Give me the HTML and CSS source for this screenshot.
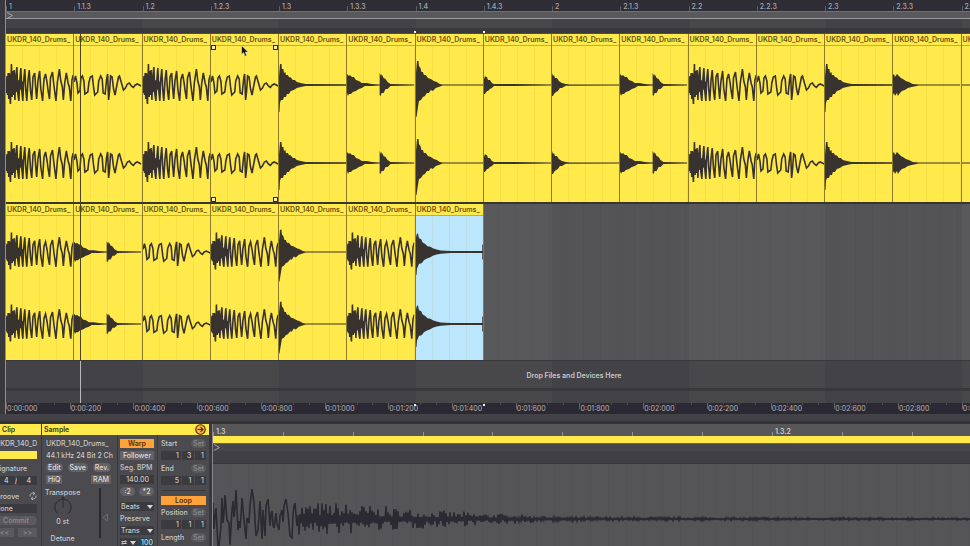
FILE: index.html
```html
<!DOCTYPE html>
<html lang="en">
<head>
  <meta charset="UTF-8">
  <meta name="viewport" content="width=device-width, initial-scale=1.0">
  <title>Arrangement</title>
  <link rel="stylesheet" href="styles.css">
</head>
<body>

  <!-- waveform shapes, one per sample slice -->
  <svg class="defs" aria-hidden="true">
    <g id="w-roll"><path d="M0,-6 L2,-9 5,-11 8,-8 12,-5 18,-3 18,3 12,6 8,9 5,12 2,10 0,6Z"/><path class="line" d="M0,-6 L.5,8 1,-9 1.6,10 2.2,-12 2.8,14 3.4,-12 4,12 4.5,19 5.5,-21 6.2,12 7,-14 7.6,10 8.2,-15 9,15 9.8,-8 11,-18 12,9 13,16 14,-5 15,-17 16,6 17,16 18,-6 19,-16 20,5 21,16 22.3,-5 23.5,-15 24.8,6 26,15 27.3,-8 29,-12 30,3 31,14 32.3,-4 34,-14 35.2,4 37,16 38.4,-6 40,-11 41.6,-2 42.6,6 44,14 45,-7 47,-13 48.4,0 50.5,16 52,-3 54,-16 55.4,-4 57,2 58,15 59.4,-2 61,-12 62.8,-2 64,2 65.5,16 66.7,-5 68,-10"/></g>
    <g id="w-wobble"><path class="line" d="M0,-3 L1.5,-9 3,-2 4,8 6,6 7,-7 8.5,-9 10,-4 11,9 14,7 15,-2 16.5,-8 18.5,-9 20,4 21,10 24,7 25,-4 27,-9 28.5,-6 29.5,8 31.5,9 33,-6 34,-11 35,15 36,6 37,-9 38.5,-8 40,4 41.5,10 43,2 45,-8 46,-9 48,-2 50,5 52,3 54,-1 56,-2 58,1 60,2.5 62,0 64,-1 68,1"/></g>
    <g id="w-kick"><path d="M0,-8 L1,-21 2.5,-21 3,-16 4.5,-16 5,-12 6.5,-13 7,-10 9,-10 10,-8 12,-7.5 14,-5 16,-5 18,-3 22,-2 27,-1 68,-.7 68,.7 27,1 22,2 18,3 15,5 12,6 10,9 8,9 7,12 5,12 4,15 2,15 1,18 .5,27 0,27Z"/></g>
    <g id="w-bigkick"><path d="M0,-12 L1,-24 2.5,-24 3,-19 4.5,-17 5.5,-13 7,-13 8,-10 10,-10 12,-7 15,-6 18,-4 21,-3 24,-1 27,-.5 68,-.5 68,.5 27,.5 23,2 20,3 17,6 15,5 13,8 11,8 9,11 7,12 5,15 3,16 2,22 .5,32 0,32Z"/></g>
    <g id="w-double"><path d="M0,-11 L2,-9 3,-10 5,-8 7,-8 9,-5 12,-4 15,-2 20,-2 25,-1 33,-.6 33,-12 34.5,-9 35,-11 37,-7 39,-6 41,-3 44,-1 68,-.6 68,.6 44,1 41,4 39,4 37,8 35,8 34,11 33,10 33,.6 25,1 18,1 15,3 12,4 9,6 6,7 4,9 2,9 1,11 0,8Z"/></g>
    <g id="w-small"><path d="M0,-6 L1,-9 2,-8 3,-8 4,-5 6,-5 8,-2 10,-1 30,-1 68,-.6 68,.6 30,1 10,1 8,3 6,4 4,6 3,6 1,9 0,9Z"/></g>
    <g id="w-hit"><path d="M0,-12 L1,-9 2,-10 3,-7 5,-7 7,-4 10,-2 14,-1 18,-.5 68,-.5 68,.5 14,.8 10,3 8,3 6,6 4,7 2,9 1,11 0,11Z"/></g>
    <g id="w-tom"><path d="M0,-10 L1,-11 2,-8 4,-11 6,-9 8,-7 10,-6 13,-4 16,-3 20,-1 26,-.5 68,-.5 68,.5 26,.6 19,2 15,3 12,5 9,6 7,8 5,11 4,8 2,11 1,8 0,10Z"/></g>
    <g id="w-sub"><path d="M0,-16 L1,-20 2,-20 3,-15 5,-14 7,-10 9,-9 12,-6 14,-6 17,-4 20,-3 25,-1.5 35,-1 67,-1 67,-8 68,-8 68,8 67,8 67,1 35,1 25,2 20,3 17,4 14,6 11,7 8,9 6,12 3,13 1,18 .5,25 0,25Z"/></g>
    <g id="w-flat"><path d="M0,-.5H68V.5H0Z"/></g>

    <symbol id="roll" viewBox="0 0 68 156" preserveAspectRatio="none"><use href="#w-roll" y="39"/><use href="#w-roll" y="117"/></symbol>
    <symbol id="wobble" viewBox="0 0 68 156" preserveAspectRatio="none"><use href="#w-wobble" y="39"/><use href="#w-wobble" y="117"/></symbol>
    <symbol id="kick" viewBox="0 0 68 156" preserveAspectRatio="none"><use href="#w-kick" y="39"/><use href="#w-kick" y="117"/></symbol>
    <symbol id="bigkick" viewBox="0 0 68 156" preserveAspectRatio="none"><use href="#w-bigkick" y="39"/><use href="#w-bigkick" y="117"/></symbol>
    <symbol id="double" viewBox="0 0 68 156" preserveAspectRatio="none"><use href="#w-double" y="39"/><use href="#w-double" y="117"/></symbol>
    <symbol id="small" viewBox="0 0 68 156" preserveAspectRatio="none"><use href="#w-small" y="39"/><use href="#w-small" y="117"/></symbol>
    <symbol id="hit" viewBox="0 0 68 156" preserveAspectRatio="none"><use href="#w-hit" y="39"/><use href="#w-hit" y="117"/></symbol>
    <symbol id="tom" viewBox="0 0 68 156" preserveAspectRatio="none"><use href="#w-tom" y="39"/><use href="#w-tom" y="117"/></symbol>
    <symbol id="sub" viewBox="0 0 68 156" preserveAspectRatio="none"><use href="#w-sub" y="39"/><use href="#w-sub" y="117"/></symbol>
    <symbol id="flat" viewBox="0 0 68 156" preserveAspectRatio="none"><use href="#w-flat" y="39"/><use href="#w-flat" y="117"/></symbol>
  </svg>

  <main class="arrangement">
    <div class="row ruler">
      <span>1</span><span>1.1.3</span><span>1.2</span><span>1.2.3</span><span>1.3</span>
      <span>1.3.3</span><span>1.4</span><span>1.4.3</span><span>2</span><span>2.1.3</span>
      <span>2.2</span><span>2.2.3</span><span>2.3</span><span>2.3.3</span><span>2.4</span>
    </div>
    <div class="loop-strip">
      <svg class="flag" viewBox="0 0 8 7"><path d="M1,.5 L6.5,3.5 1,6.5"/></svg>
    </div>
    <div class="scrub"></div>
    <div class="scrub-edge"></div>

    <div class="row lane lane-a">
      <div class="clip"><span>UKDR_140_Drums_</span><svg><use href="#roll"/></svg></div>
      <div class="clip"><span>UKDR_140_Drums_</span><svg><use href="#wobble"/></svg></div>
      <div class="clip"><span>UKDR_140_Drums_</span><svg><use href="#roll"/></svg></div>
      <div class="clip handles"><span>UKDR_140_Drums_</span><svg><use href="#wobble"/></svg><i></i><i></i><i></i><i></i></div>
      <div class="clip"><span>UKDR_140_Drums_</span><svg><use href="#kick"/></svg></div>
      <div class="clip"><span>UKDR_140_Drums_</span><svg><use href="#double"/></svg></div>
      <div class="clip"><span>UKDR_140_Drums_</span><svg><use href="#bigkick"/></svg></div>
      <div class="clip"><span>UKDR_140_Drums_</span><svg><use href="#small"/></svg></div>
      <div class="clip"><span>UKDR_140_Drums_</span><svg><use href="#hit"/></svg></div>
      <div class="clip"><span>UKDR_140_Drums_</span><svg><use href="#double"/></svg></div>
      <div class="clip"><span>UKDR_140_Drums_</span><svg><use href="#roll"/></svg></div>
      <div class="clip"><span>UKDR_140_Drums_</span><svg><use href="#wobble"/></svg></div>
      <div class="clip"><span>UKDR_140_Drums_</span><svg><use href="#kick"/></svg></div>
      <div class="clip"><span>UKDR_140_Drums_</span><svg><use href="#tom"/></svg></div>
      <div class="clip"><span>UKDR_140_Drums_</span><svg><use href="#flat"/></svg></div>
    </div>
    <div class="row lane lane-b">
      <div class="clip"><span>UKDR_140_Drums_</span><svg><use href="#roll"/></svg></div>
      <div class="clip"><span>UKDR_140_Drums_</span><svg><use href="#double"/></svg></div>
      <div class="clip"><span>UKDR_140_Drums_</span><svg><use href="#wobble"/></svg></div>
      <div class="clip"><span>UKDR_140_Drums_</span><svg><use href="#roll"/></svg></div>
      <div class="clip"><span>UKDR_140_Drums_</span><svg><use href="#bigkick"/></svg></div>
      <div class="clip"><span>UKDR_140_Drums_</span><svg><use href="#roll"/></svg></div>
      <div class="clip selected"><span>UKDR_140_Drums_</span><svg><use href="#sub"/></svg></div>
    </div>

    <div class="drop">Drop Files and Devices Here</div>
    <div class="track-gap"></div>
    <div class="master"></div>
    <div class="time-ruler">
      <span>0:00:000</span><span>0:00:200</span><span>0:00:400</span><span>0:00:600</span>
      <span>0:00:800</span><span>0:01:000</span><span>0:01:200</span><span>0:01:400</span>
      <span>0:01:600</span><span>0:01:800</span><span>0:02:000</span><span>0:02:200</span>
      <span>0:02:400</span><span>0:02:600</span><span>0:02:800</span><span>0:03:000</span>
    </div>

    <div class="playhead"></div>
    <div class="mark mark-start"></div>
    <div class="mark mark-end"></div>
    <div class="mark mark-start mark-low"></div>
    <div class="mark mark-end mark-low"></div>
    <svg class="cursor" viewBox="0 0 8 12"><path d="M.5,.5 V9.5 L2.6,7.7 4,11.3 5.8,10.5 4.3,7.2 7.2,7Z"/></svg>
  </main>

  <section class="detail">
    <div class="panel clip-panel">
      <h2>Clip</h2>
      <div class="clip-inner">
        <div class="name">UKDR_140_Drums_</div>
        <button class="color" aria-label="Clip colour"></button>
        <label for="sigTop">Signature</label>
        <div class="sig"><input id="sigTop" value="4"><span>/</span><input aria-label="Denominator" value="4"></div>
        <label class="groove" for="groove">Groove
          <svg viewBox="0 0 8 8"><path d="M1,4.5 A3,3 0 0 1 5.5,1.4 M7,3.5 A3,3 0 0 1 2.5,6.6 M4,0 L6,1.5 4,3 M4,5 L2,6.5 4,8"/></svg>
        </label>
        <select id="groove"><option>None</option></select>
        <button class="pill off">Commit</button>
        <div class="pair"><button class="off">&lt;&lt;</button><button class="off">&gt;&gt;</button></div>
      </div>
    </div>

    <div class="panel sample-panel">
      <h2>Sample
        <button class="hot" aria-label="Hot swap"><svg viewBox="0 0 10 10"><circle cx="5" cy="5" r="4.3"/><path d="M2.3,5H7 M5,2.8 L7.3,5 5,7.2"/></svg></button>
      </h2>
      <div class="columns">
        <div class="col col-sample">
          <div class="name">UKDR_140_Drums_</div>
          <div class="info">44.1 kHz 24 Bit 2 Ch</div>
          <div class="buttons"><button class="pill">Edit</button><button class="pill">Save</button><button class="pill">Rev.</button></div>
          <div class="buttons"><button>HiQ</button><button>RAM</button></div>
          <div class="pitch">
            <div class="transpose">
              <span>Transpose</span>
              <svg viewBox="0 0 22 22"><path d="M5.5,18.5 A9,9 0 1 1 16.5,18.5 M11,12V3"/><path class="tip" d="M9,0H13L11,2.5Z"/></svg>
              <b>0 st</b>
              <span class="detune">Detune</span>
            </div>
            <svg class="gain" viewBox="0 0 10 50"><path class="track" d="M1,0V50"/><path d="M8.5,26 L4,29.5 8.5,33Z"/></svg>
          </div>
        </div>

        <div class="col col-warp">
          <button class="on">Warp</button>
          <button>Follower</button>
          <label for="bpm">Seg. BPM</label>
          <input id="bpm" value="140.00">
          <div class="pair"><button class="pill">:2</button><button class="pill">*2</button></div>
          <div class="drop-down mode"><select aria-label="Warp mode"><option>Beats</option></select></div>
          <label for="preserve">Preserve</label>
          <div class="drop-down"><select id="preserve"><option>Trans</option></select></div>
          <div class="transient">
            <div class="drop-down"><select aria-label="Transient loop mode"><option>⇄</option></select></div>
            <input class="blue" aria-label="Transient envelope" value="100">
          </div>
        </div>

        <div class="col col-loop">
          <div class="head"><span>Start</span><button class="pill off">Set</button></div>
          <div class="cells"><input aria-label="Start bar" value="1"><input aria-label="Start beat" value="3"><input aria-label="Start sixteenth" value="1"></div>
          <div class="head"><span>End</span><button class="pill off">Set</button></div>
          <div class="cells"><input aria-label="End bar" value="5"><input aria-label="End beat" value="1"><input aria-label="End sixteenth" value="1"></div>
          <hr>
          <button class="on">Loop</button>
          <div class="head"><span>Position</span><button class="pill off">Set</button></div>
          <div class="cells"><input aria-label="Position bar" value="1"><input aria-label="Position beat" value="1"><input aria-label="Position sixteenth" value="1"></div>
          <div class="head"><span>Length</span><button class="pill off">Set</button></div>
        </div>
      </div>
    </div>

    <div class="editor">
      <div class="editor-ruler">
        <span>1.3</span><span></span><span></span><span></span><span></span><span></span>
        <span></span><span></span><span>1.3.2</span><span></span><span></span>
      </div>
      <div class="editor-loop"></div>
      <div class="editor-marker"><svg class="flag" viewBox="0 0 8 7"><path d="M1,.5 L6.5,3.5 1,6.5"/></svg></div>
      <div class="editor-scrub"></div>
      <svg class="editor-wave" viewBox="0 0 757 82" preserveAspectRatio="none"><path id="wave"/></svg>
    </div>
  </section>

  <script src="script.js"></script>
</body>
</html>
```
FILE: styles.css
```css
* {
  box-sizing: border-box;
}

body {
  margin: 0;
  height: 100vh;
  display: flex;
  flex-direction: column;
  overflow: hidden;
  background: #39383d;
  color: #c9c8ca;
  font-family: Inter, "Liberation Sans", sans-serif;
  font-size: 7px;
  font-weight: 500;
  line-height: 9px;
}

.defs {
  position: absolute;
  width: 0;
  height: 0;
}

/* Arrangement */
.arrangement {
  position: relative;
  margin-left: 5px;
  border-left: 1px solid #908f92;
}

.row {
  display: grid;
  grid-template-columns: repeat(15, 7.08%);
  grid-template-rows: 100%;
  overflow: hidden;
}

.ruler {
  height: 11px;
  background: #2e2d35;
  color: #a8a7aa;
}

.ruler span {
  padding: 2px 0 0 3px;
  background: linear-gradient(#5c5b61, #5c5b61) 0 6px / 1px 5px no-repeat;
}

.loop-strip {
  height: 8px;
  background: #59585b;
  border-top: 1px solid #706f72;
  border-bottom: 1px solid #9a999c;
}

.flag {
  display: block;
  width: 8px;
  height: 7px;
  fill: none;
  stroke: #a5a4a7;
}

.scrub,
.drop,
.master {
  background: repeating-linear-gradient(90deg, #434246 0 14.16%, #48474a 14.16% 28.32%);
}

.scrub {
  height: 9px;
}

.scrub-edge {
  height: 5px;
  background: #3a383b;
}

.lane {
  border-top: 1px solid #57501f;
}

.lane-a {
  height: 169px;
}

.lane-b {
  height: 159px;
  border-top: 2px solid #39362f;
  border-bottom: 1px solid #39383a;
  background:
    repeating-linear-gradient(90deg, transparent 0 16px, rgba(0, 0, 0, 0.04) 16px 17px),
    repeating-linear-gradient(90deg, #545356 0 14.16%, #59585b 14.16% 28.32%);
}

.clip {
  position: relative;
  display: flex;
  flex-direction: column;
  min-width: 0;
  border-right: 1px solid #8c7c28;
  background: #ffe94b;
  color: #66520f;
}

.clip span {
  flex: none;
  height: 12px;
  padding: 1px 0 0 1px;
  overflow: hidden;
  border-bottom: 1px solid #c6ae34;
  font-weight: 600;
  line-height: 10px;
}

.clip svg {
  display: block;
  width: 100%;
  flex: 1;
  min-height: 0;
  fill: #38332f;
  background: repeating-linear-gradient(90deg, transparent 0 16px, rgba(150, 120, 0, 0.08) 16px 17px);
}

.line {
  fill: none;
  stroke: #38332f;
  stroke-width: 1.6px;
  vector-effect: non-scaling-stroke;
}

.selected svg {
  background-color: #bce6fc;
}

.handles i {
  position: absolute;
  width: 5px;
  height: 5px;
  border: 1px solid #33291a;
  background: #fff0a0;
}

.handles i:nth-of-type(1) { left: 0; top: 11px; }
.handles i:nth-of-type(2) { right: 0; top: 11px; }
.handles i:nth-of-type(3) { left: 0; bottom: 0; }
.handles i:nth-of-type(4) { right: 0; bottom: 0; }

.drop {
  height: 27px;
  display: flex;
  justify-content: center;
  align-items: center;
  padding: 2px 0 0 172px;
  font-weight: 600;
}

.track-gap {
  height: 3px;
  background: #39383b;
}

.master {
  height: 12px;
}

.time-ruler {
  display: grid;
  grid-template-columns: repeat(16, 6.61%);
  height: 11px;
  overflow: hidden;
  background: #2a2934;
  color: #b9b1b3;
  font-weight: 400;
  line-height: 11px;
}

.time-ruler span {
  padding-left: 1px;
  background:
    linear-gradient(#66656b, #66656b) 0 0 / 1px 6px no-repeat,
    repeating-linear-gradient(90deg, #4b4a50 0 1px, transparent 1px 25%) 0 0 / 100% 2px no-repeat;
}

.playhead {
  position: absolute;
  left: 74px;
  top: 33px;
  bottom: 11px;
  width: 1px;
  background: linear-gradient(#4b431f 0 328px, #b8b7ba 328px);
}

.mark {
  position: absolute;
  top: 31px;
  width: 2px;
  height: 2px;
  background: #f0f0f0;
}

.mark-start { left: 42.3%; }
.mark-end { left: 49.5%; }
.mark-low { top: 404px; }

.cursor {
  position: absolute;
  left: 235px;
  top: 45px;
  width: 8px;
  height: 12px;
  fill: #17151a;
  stroke: #f3eecf;
  stroke-width: 0.6px;
}

/* Detail view */
.detail {
  flex: 1;
  min-height: 0;
  display: flex;
  margin-top: 7px;
  border-top: 3px solid #343338;
  box-shadow: 0 -7px #434247;
}

.panel {
  overflow: hidden;
  background: #4b4a4e;
}

.panel h2 {
  display: flex;
  justify-content: space-between;
  align-items: center;
  height: 11px;
  margin: 0;
  padding: 0 3px 0 2px;
  background: #ffe94b;
  color: #40340d;
  font-size: 7px;
  font-weight: 600;
}

button,
input,
select {
  display: block;
  height: 9px;
  margin: 0;
  padding: 0 2px;
  border: 0;
  border-radius: 0;
  font: inherit;
  color: inherit;
  appearance: none;
}

button {
  background: #626165;
  color: #dddcde;
  text-align: center;
}

input,
select {
  min-width: 0;
  width: 100%;
  background: #3b3a3e;
}

input {
  text-align: right;
}

.pill {
  border-radius: 5px;
}

.off {
  background: #5a595d;
  color: #8a898d;
}

.on {
  background: #ffa23c;
  color: #50300a;
  font-weight: 600;
}

.pair {
  display: flex;
  gap: 4px;
}

.pair button {
  flex: 1;
}

.clip-panel {
  flex: none;
  width: 41px;
}

.clip-inner {
  display: flex;
  flex-direction: column;
  gap: 3px;
  margin-left: -8px;
  padding: 4px 4px 0 3px;
}

.name {
  overflow: hidden;
  white-space: nowrap;
}

.color {
  height: 8px;
  background: #ffe94b;
}

.clip-inner label {
  padding-top: 2px;
}

.clip-inner .groove {
  display: flex;
  justify-content: space-between;
  padding-top: 4px;
}

.clip-inner select {
  padding: 0;
}

.groove svg {
  width: 8px;
  height: 8px;
  fill: none;
  stroke: #c9c8ca;
  stroke-width: 0.8px;
}

.sig {
  display: flex;
}

.sig input {
  padding-right: 6px;
}

.sample-panel {
  flex: none;
  width: 167px;
  margin-left: 1px;
}

.hot {
  width: 11px;
  height: 11px;
  padding: 0;
  background: none;
}

.hot svg {
  display: block;
  width: 11px;
  height: 11px;
  fill: #ffb545;
  stroke: #4a2c0c;
}

.columns {
  display: flex;
}

.col {
  display: flex;
  flex-direction: column;
  padding: 4px 3px 0;
  height: 120px;
}

.col + .col {
  border-left: 1px solid #39383c;
}

.col-sample {
  width: 75px;
  gap: 3px;
}

.col-sample .name,
.col-sample .info {
  padding-left: 1px;
  white-space: nowrap;
}

.buttons {
  display: flex;
  justify-content: space-between;
  padding: 0 3px 0 1px;
}

.pitch {
  display: flex;
  justify-content: space-between;
  padding: 1px 5px 0 0;
}

.transpose {
  display: flex;
  flex-direction: column;
  align-items: center;
}

.transpose svg {
  width: 22px;
  height: 20px;
  fill: none;
  stroke: #29282c;
}

.transpose .tip {
  fill: #29282c;
  stroke: none;
}

.transpose b {
  font-weight: 500;
}

.transpose .detune {
  padding-top: 8px;
}

.gain {
  width: 10px;
  height: 50px;
  fill: none;
  stroke: #6d6c70;
}

.gain .track {
  stroke: #29282c;
  stroke-width: 2px;
}

.col-warp {
  width: 40px;
  gap: 3px;
  padding-left: 2px;
}

.col-warp > button {
  padding: 0;
}

.col-warp label {
  white-space: nowrap;
}

.col-warp input {
  padding-right: 5px;
}

.drop-down {
  position: relative;
}

.drop-down::after {
  content: "";
  position: absolute;
  right: 1px;
  top: 3px;
  border: 3px solid transparent;
  border-top: 4px solid #d8d7d9;
  border-bottom: 0;
  pointer-events: none;
}

.drop-down select {
  padding: 0 1px;
}

.mode {
  margin-top: 3px;
}

.transient {
  display: grid;
  grid-template-columns: 1fr 1fr;
}

.col-warp .blue {
  padding: 0 1px;
  background: #31434d;
  color: #a5e3f7;
}

.col-loop {
  flex: 1;
  gap: 3px;
}

.head {
  display: flex;
  justify-content: space-between;
}

.cells {
  display: grid;
  grid-template-columns: 20px 1fr 1fr;
  gap: 1px;
  margin-bottom: 1px;
}

.col-loop hr {
  width: 100%;
  margin: 1px 0 2px;
  border: 0;
  border-top: 1px solid #39383c;
}

/* Sample editor */
.editor {
  flex: 1;
  min-width: 0;
  margin-left: 3px;
  display: flex;
  flex-direction: column;
  border-left: 1px solid #88878a;
  background: #555457;
}

.editor-ruler {
  display: grid;
  grid-template-columns: repeat(11, 9.23%);
  height: 12px;
  overflow: hidden;
  background: #575659;
  font-weight: 600;
}

.editor-ruler span {
  padding: 3px 0 0 3px;
  background: linear-gradient(#929194, #929194) 0 8px / 1px 4px no-repeat;
}

.editor-loop {
  height: 8px;
  background: #ffe94b;
  border-bottom: 1px solid #6f6840;
}

.editor-marker {
  height: 7px;
  background: #464549;
}

.editor-scrub {
  height: 13px;
  background: #403f43;
  border-bottom: 1px solid #39383b;
}

.editor-wave {
  display: block;
  width: 100%;
  height: 82px;
  fill: none;
  stroke: #2b2a33;
  stroke-width: 1.6px;
  background: repeating-linear-gradient(90deg, transparent 0 17px, rgba(0, 0, 0, 0.04) 17px 18px);
}
```
FILE: script.js
```js
// attack of the sample, as x / offset from the centre line
var attack = [
  [0, -16], [1, 10], [2, -3], [3, -11], [5, 27], [6, 27], [8, 7], [9, -21], [10, 4], [11, -6],
  [12, -24], [14, 1], [16, 4], [17, 26], [19, -9], [20, -18], [21, -2], [22, -11], [23, -29],
  [25, 11], [26, 2], [27, 9], [28, -3], [29, -21], [31, 1], [33, 20], [34, -1], [36, 4],
  [37, -13], [39, -30], [41, -16], [43, 17], [45, 11], [47, -18], [49, 20], [50, -9], [52, 17],
  [53, -13], [55, -20], [57, 7], [58, -5], [59, -8], [60, 6], [61, 9], [63, -6], [64, 5],
  [66, 11], [67, -3], [69, -9], [70, 3], [71, -13], [73, -20], [75, -6], [77, 17], [79, 19],
  [80, -4], [81, -13], [82, -16], [84, 7]
];

// height of the tail at a given x
var envelope = [[85, 18], [130, 17], [180, 12], [240, 8], [300, 5], [350, 2], [757, 1]];

function heightAt(x) {
  for (var i = 1; i < envelope.length; i++) {
    var a = envelope[i - 1], b = envelope[i];
    if (x <= b[0]) {
      return a[1] + (b[1] - a[1]) * (x - a[0]) / (b[0] - a[0]);
    }
  }
  return 1;
}

function drawWave() {
  var mid = 55;
  var seed = 7;
  var points = attack.map(function (p) { return p[0] + ',' + (mid + p[1]); });
  var sign = 1;
  for (var x = 85; x <= 757; x += 1) {
    seed = (seed * 16807) % 2147483647;
    var n = seed / 2147483647;
    var r = 0.2 + 0.8 * n * n;
    sign = -sign;
    points.push(x + ',' + (mid + sign * r * heightAt(x)).toFixed(1));
  }
  document.getElementById('wave').setAttribute('d', 'M' + points.join(' L'));
}

drawWave();
```
